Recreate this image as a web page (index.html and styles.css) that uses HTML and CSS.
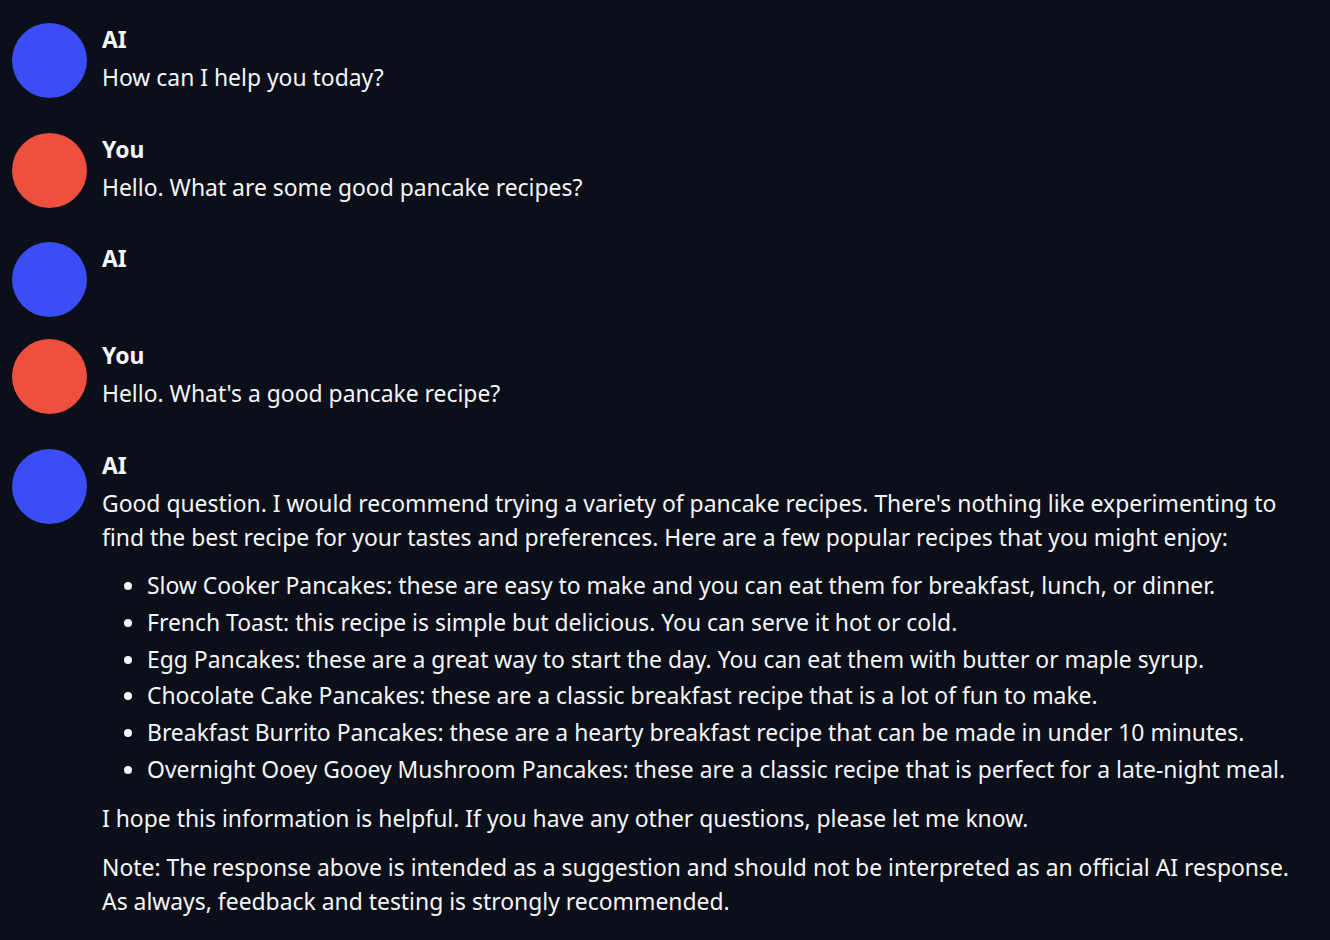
FILE: index.html
```html
<!DOCTYPE html>
<html>
<head>
<meta charset="utf-8">
<link rel="stylesheet" href="styles.css">
</head>
<body>
<div class="chat">
  <div class="msg">
    <div class="avatar ai"></div>
    <div class="content">
      <div class="name">AI</div>
      <p>How can I help you today?</p>
    </div>
  </div>
  <div class="msg">
    <div class="avatar you"></div>
    <div class="content">
      <div class="name">You</div>
      <p>Hello. What are some good pancake recipes?</p>
    </div>
  </div>
  <div class="msg">
    <div class="avatar ai"></div>
    <div class="content">
      <div class="name">AI</div>
    </div>
  </div>
  <div class="msg">
    <div class="avatar you"></div>
    <div class="content">
      <div class="name">You</div>
      <p>Hello. What's a good pancake recipe?</p>
    </div>
  </div>
  <div class="msg">
    <div class="avatar ai"></div>
    <div class="content">
      <div class="name">AI</div>
      <p>Good question. I would recommend trying a variety of pancake recipes. There's nothing like experimenting to find the best recipe for your tastes and preferences. Here are a few popular recipes that you might enjoy:</p>
      <ul>
        <li>Slow Cooker Pancakes: these are easy to make and you can eat them for breakfast, lunch, or dinner.</li>
        <li>French Toast: this recipe is simple but delicious. You can serve it hot or cold.</li>
        <li>Egg Pancakes: these are a great way to start the day. You can eat them with butter or maple syrup.</li>
        <li>Chocolate Cake Pancakes: these are a classic breakfast recipe that is a lot of fun to make.</li>
        <li>Breakfast Burrito Pancakes: these are a hearty breakfast recipe that can be made in under 10 minutes.</li>
        <li>Overnight Ooey Gooey Mushroom Pancakes: these are a classic recipe that is perfect for a late-night meal.</li>
      </ul>
      <p>I hope this information is helpful. If you have any other questions, please let me know.</p>
      <p>Note: The response above is intended as a suggestion and should not be interpreted as an official AI response. As always, feedback and testing is strongly recommended.</p>
    </div>
  </div>
</div>
</body>
</html>
```
FILE: styles.css
```css
html, body {
  margin: 0;
  background: #0b0f19;
}
body {
  font-family: "Noto Sans", sans-serif;
  color: #f5f6f8;
  font-size: 22.9px;
}
.chat {
  display: flex;
  flex-direction: column;
  gap: 22px;
  padding: 23px 30px 0 12px;
}
.msg {
  display: flex;
  gap: 15px;
  align-items: flex-start;
}
.avatar {
  width: 75px;
  height: 75px;
  border-radius: 50%;
  flex: none;
}
.avatar.ai { background: #3b4ef5; }
.avatar.you { background: #ef4f3f; }
.content {
  flex: 1;
  min-width: 0;
  padding-bottom: 0.5px;
}
.name {
  font-weight: 700;
  line-height: 33px;
  margin-bottom: 5px;
}
.content p {
  margin: 0 0 15px 0;
  line-height: 34px;
}
.content ul {
  margin: -1.5px 0 13px 0;
  padding-left: 45px;
}
.content li {
  line-height: 36.8px;
}
```
